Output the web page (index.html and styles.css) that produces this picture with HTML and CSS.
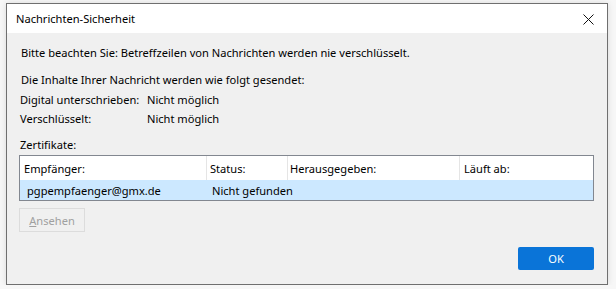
FILE: index.html
```html
<!DOCTYPE html>
<html lang="de">
<head>
    <meta charset="UTF-8">
    <title>Nachrichten-Sicherheit</title>
    <link rel="stylesheet" href="styles.css">
</head>
<body>
    <div class="dialog">
        <div class="titlebar">
            <span class="title">Nachrichten-Sicherheit</span>
            <svg class="close" width="11" height="11" viewBox="0 0 11 11">
                <path d="M0.5 0.5 L10.5 10.5 M10.5 0.5 L0.5 10.5" stroke="#111" stroke-width="1" fill="none"/>
            </svg>
        </div>

        <div class="content">
            <p class="note">Bitte beachten Sie: Betreffzeilen von Nachrichten werden nie verschlüsselt.</p>
            <p class="intro">Die Inhalte Ihrer Nachricht werden wie folgt gesendet:</p>
            <div class="status-grid">
                <span>Digital unterschrieben:</span><span>Nicht möglich</span>
                <span>Verschlüsselt:</span><span>Nicht möglich</span>
            </div>
            <p class="label">Zertifikate:</p>

            <div class="cert-list">
                <div class="cert-row header">
                    <span class="col col-1">Empfänger:</span>
                    <span class="col col-2">Status:</span>
                    <span class="col col-3">Herausgegeben:</span>
                    <span class="col col-4">Läuft ab:</span>
                </div>
                <div class="cert-row selected">
                    <span class="col col-1">pgpempfaenger@gmx.de</span>
                    <span class="col col-2">Nicht gefunden</span>
                    <span class="col col-3"></span>
                    <span class="col col-4"></span>
                </div>
            </div>

            <button class="btn-view" disabled><u>A</u>nsehen</button>

            <div class="footer">
                <button class="btn-ok">OK</button>
            </div>
        </div>
    </div>
</body>
</html>
```

FILE: styles.css
```css
body {
    margin: 0;
    background: #f7f7f7;
    font-family: "Noto Sans", "Open Sans", sans-serif;
    font-size: 11.1px;
    color: #000;
}
.dialog {
    margin: 3px 0 0 6px;
    width: 600px;
    height: 280px;
    border: 1px solid #6f6f6f;
    background: #f0f0f0;
    box-shadow: 0 0 6px rgba(0, 0, 0, 0.12);
    display: flex;
    flex-direction: column;
    white-space: nowrap;
}
.titlebar {
    height: 29px;
    background: #fff;
    display: flex;
    align-items: center;
    justify-content: space-between;
    padding: 0 10px 0 9px;
}
.title {
    margin-top: -1px;
}
.close {
    margin-right: 3px;
    margin-top: 1px;
}
.content {
    flex: 1;
    padding: 12px 13px 14px 12px;
    display: flex;
    flex-direction: column;
}
.content p {
    margin: 0;
    line-height: 16px;
}
.note {
    padding-left: 2px;
}
.intro {
    margin-top: 11px !important;
    padding-left: 2px;
}
.status-grid {
    margin-top: 4px;
    padding-left: 1px;
    display: grid;
    grid-template-columns: 127px auto;
    row-gap: 3px;
    line-height: 16px;
}
.label {
    margin-top: 10px !important;
    padding-left: 1px;
}
.cert-list {
    margin-top: 2px;
    border: 1px solid #828790;
    background: #fff;
}
.cert-row {
    display: flex;
}
.cert-row.header {
    height: 24px;
}
.cert-row.selected {
    height: 20px;
    background: #cce8ff;
}
.col {
    display: flex;
    align-items: center;
    flex-shrink: 0;
    box-sizing: border-box;
    overflow: visible;
}
.header .col {
    border-right: 1px solid #e5e5e5;
}
.header .col-4 {
    border-right: none;
}
.col-1 { width: 187px; padding-left: 4px; }
.col-2 { width: 81px; padding-left: 3px; }
.col-3 { width: 172px; padding-left: 2px; }
.col-4 { flex: 1; padding-left: 4px; }
.selected .col-1 { padding-left: 7px; }
.selected .col-2 { padding-left: 5px; }
.btn-view {
    margin-top: 7px;
    align-self: flex-start;
    width: 66px;
    height: 24px;
    font: inherit;
    color: #a0a0a0;
    background: #f0f0f0;
    border: 1px solid #dcdcdc;
    padding: 0;
}
.footer {
    margin-top: auto;
    display: flex;
    justify-content: flex-end;
}
.btn-ok {
    width: 76px;
    height: 23px;
    font: inherit;
    color: #fff;
    background: #0a74d8;
    border: none;
    border-radius: 2px;
    padding: 0;
}
```
